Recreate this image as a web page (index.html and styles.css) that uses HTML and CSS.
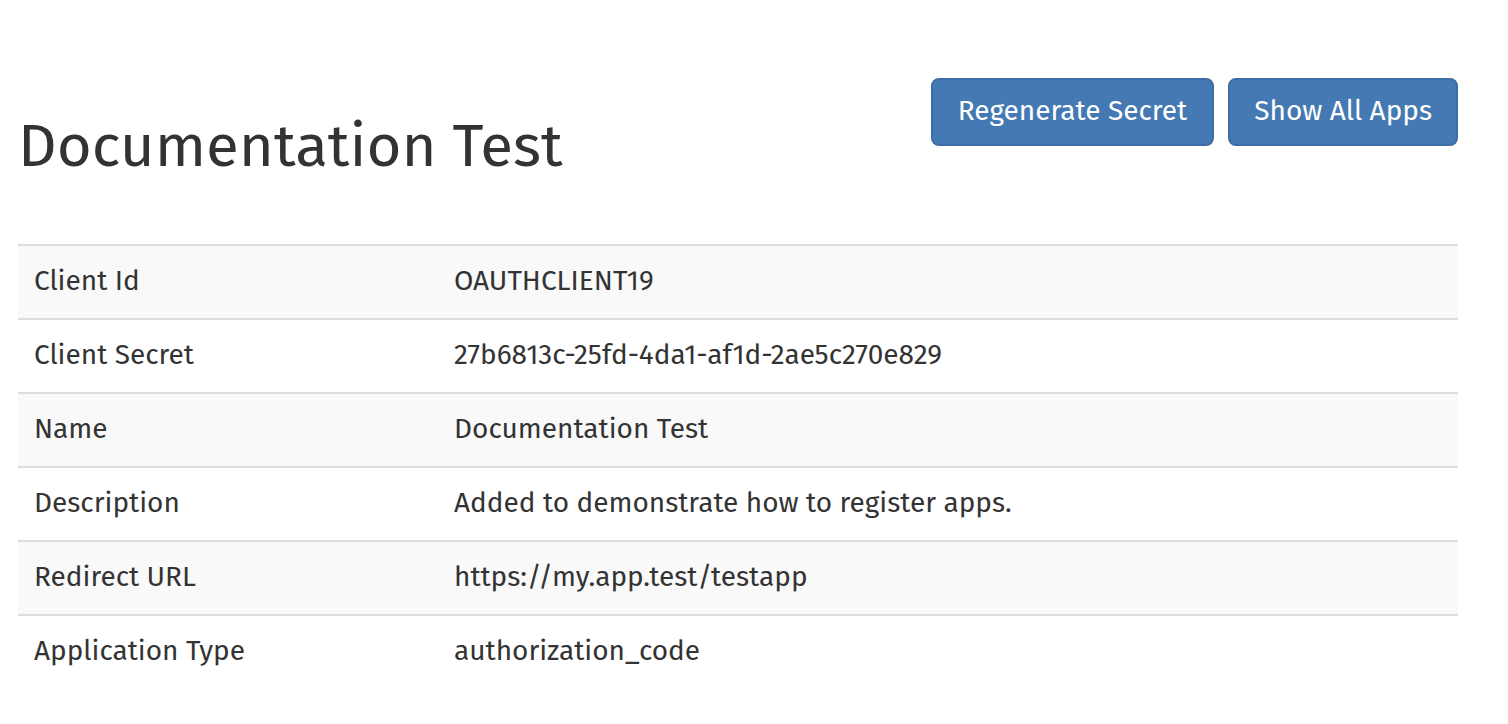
FILE: index.html
```html
<!DOCTYPE html>
<html lang="en">
<head>
<meta charset="utf-8">
<title>Documentation Test</title>
<link rel="stylesheet" href="styles.css">
</head>
<body>
<div class="page">
  <div class="header">
    <h2 class="title">Documentation Test</h2>
    <div class="actions">
      <button class="btn btn-wide">Regenerate Secret</button>
      <button class="btn">Show All Apps</button>
    </div>
  </div>
  <table class="details">
    <tbody>
      <tr><td class="label">Client Id</td><td>OAUTHCLIENT19</td></tr>
      <tr><td class="label">Client Secret</td><td>27b6813c-25fd-4da1-af1d-2ae5c270e829</td></tr>
      <tr><td class="label">Name</td><td>Documentation Test</td></tr>
      <tr><td class="label">Description</td><td>Added to demonstrate how to register apps.</td></tr>
      <tr><td class="label">Redirect URL</td><td>https://my.app.test/testapp</td></tr>
      <tr><td class="label">Application Type</td><td>authorization_code</td></tr>
    </tbody>
  </table>
</div>
</body>
</html>
```

FILE: styles.css
```css
html, body {
  margin: 0;
  padding: 0;
  background: #fff;
}

body {
  font-family: "Fira Sans", Lato, "Noto Sans", sans-serif;
  font-size: 28px;
  line-height: 40px;
  color: #333;
}

.page {
  padding: 0 50px 0 18px;
}

.header {
  display: flex;
  justify-content: space-between;
  align-items: flex-start;
}

.title {
  margin: 113px 0 0 0;
  font-size: 60px;
  line-height: 66px;
  font-weight: 400;
  color: #333;
}

.actions {
  margin-top: 78px;
  display: flex;
  gap: 14px;
}

.btn {
  font-family: inherit;
  font-size: 28px;
  line-height: 40px;
  padding: 11px 24px 13px;
  color: #fff;
  background: #4479b3;
  border: 2px solid #3b6da6;
  border-radius: 8px;
  cursor: pointer;
}

.btn-wide {
  padding-left: 25px;
  padding-right: 25px;
}

.details {
  width: 100%;
  margin-top: 65px;
  border-collapse: collapse;
}

.details td {
  padding: 15px 16px 17px;
  border-top: 2px solid #ddd;
  vertical-align: top;
  text-align: left;
}

.details tr:nth-child(odd) {
  background: #f9f9f9;
}

.details .label {
  width: 388px;
}
```
